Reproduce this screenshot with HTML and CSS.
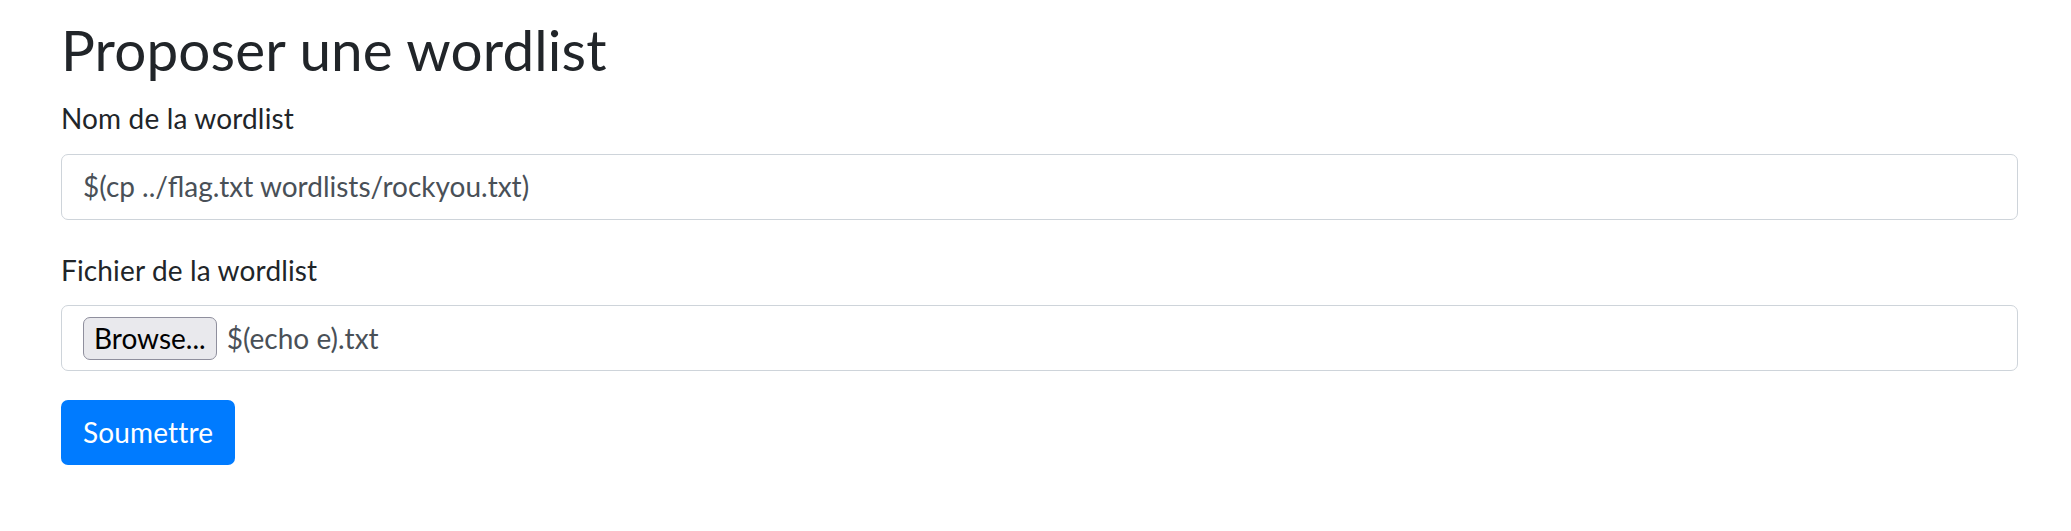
FILE: index.html
```html
<!DOCTYPE html>
<html lang="fr">
<head>
<meta charset="utf-8">
<title>Proposer une wordlist</title>
<link rel="stylesheet" href="styles.css">
</head>
<body>
<main class="container">
  <h1 class="title">Proposer une wordlist</h1>
  <form class="form">
    <div class="group">
      <label class="label" for="name">Nom de la wordlist</label>
      <div class="control" id="name">$(cp ../flag.txt wordlists/rockyou.txt)</div>
    </div>
    <div class="group">
      <label class="label">Fichier de la wordlist</label>
      <div class="control file">
        <span class="browse">Browse...</span>
        <span class="filename">$(echo e).txt</span>
      </div>
    </div>
    <div class="submit">Soumettre</div>
  </form>
</main>
</body>
</html>
```
FILE: styles.css
```css
* { box-sizing: border-box; }
html, body { margin: 0; padding: 0; background: #fff; }
body {
  font-family: Lato, "Noto Sans", sans-serif;
  font-size: 28px;
  line-height: 1.5;
  letter-spacing: 0.15px;
  color: #212529;
}
.container {
  padding: 16px 53px 0 61px;
}
.title {
  margin: 0 0 14px;
  font-size: 56.6px;
  font-weight: 400;
  line-height: 67.2px;
}
.form { display: flex; flex-direction: column; }
.group { display: flex; flex-direction: column; margin-bottom: 29px; }
.label { margin-bottom: 14.5px; line-height: 42px; }
.control {
  height: 66px;
  padding: 10.5px 21px;
  border: 1.75px solid #ced4da;
  border-radius: 7px;
  color: #495057;
  line-height: 42px;
  letter-spacing: 0;
  white-space: nowrap;
}
.file { display: flex; align-items: center; gap: 10px; }
.browse {
  display: inline-flex;
  align-items: center;
  height: 43px;
  padding: 0 10px;
  background: #e9e9ed;
  border: 1.75px solid #8f8f9d;
  border-radius: 7px;
  color: #000;
}
.submit {
  align-self: flex-start;
  height: 65px;
  padding: 10.5px 22px;
  line-height: 42px;
  background: #007bff;
  color: #fff;
  border-radius: 7px;
}
```
